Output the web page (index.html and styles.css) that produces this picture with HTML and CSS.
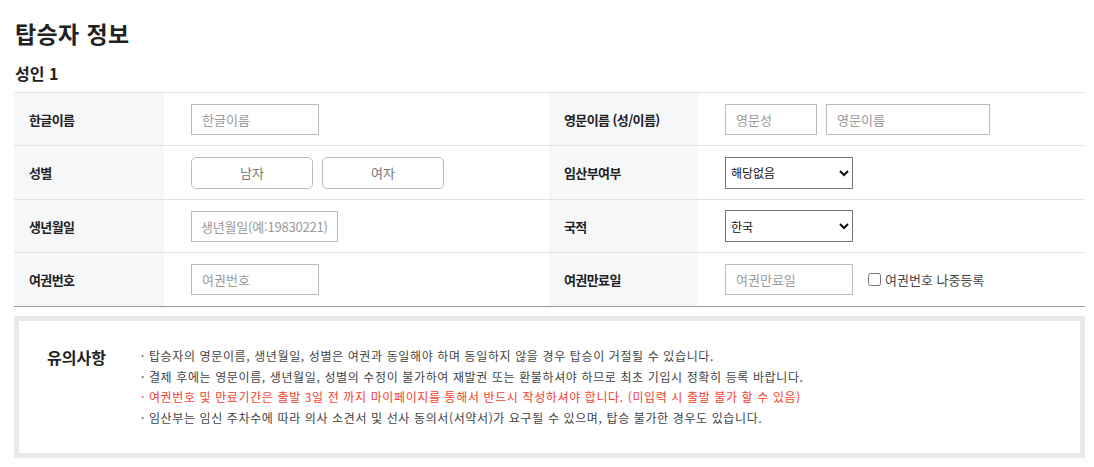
FILE: index.html
```html
<!DOCTYPE html>
<html lang="ko">
<head>
<meta charset="utf-8">
<title>탑승자 정보</title>
<link rel="stylesheet" href="styles.css">
</head>
<body>
<div class="page">
  <h2 class="title">탑승자 정보</h2>
  <h3 class="subtitle">성인 1</h3>

  <div class="form-grid">
    <div class="cell label">한글이름</div>
    <div class="cell value">
      <input class="field w128" type="text" placeholder="한글이름">
    </div>
    <div class="cell label">영문이름 (성/이름)</div>
    <div class="cell value">
      <input class="field w92" type="text" placeholder="영문성">
      <input class="field w164" type="text" placeholder="영문이름">
    </div>

    <div class="cell label">성별</div>
    <div class="cell value">
      <button class="gender" type="button">남자</button>
      <button class="gender" type="button">여자</button>
    </div>
    <div class="cell label">임산부여부</div>
    <div class="cell value">
      <select class="select">
        <option>해당없음</option>
        <option>임산부</option>
      </select>
    </div>

    <div class="cell label">생년월일</div>
    <div class="cell value">
      <input class="field w147 tight" type="text" placeholder="생년월일(예:19830221)">
    </div>
    <div class="cell label">국적</div>
    <div class="cell value">
      <select class="select">
        <option>한국</option>
        <option>기타</option>
      </select>
    </div>

    <div class="cell label last">여권번호</div>
    <div class="cell value last">
      <input class="field w128" type="text" placeholder="여권번호">
    </div>
    <div class="cell label last">여권만료일</div>
    <div class="cell value last">
      <input class="field w128" type="text" placeholder="여권만료일">
      <label class="later"><input type="checkbox" class="check"> 여권번호 나중등록</label>
    </div>
  </div>

  <div class="notice">
    <div class="notice-title">유의사항</div>
    <ul class="notice-list">
      <li>· 탑승자의 영문이름, 생년월일, 성별은 여권과 동일해야 하며 동일하지 않을 경우 탑승이 거절될 수 있습니다.</li>
      <li>· 결제 후에는 영문이름, 생년월일, 성별의 수정이 불가하여 재발권 또는 환불하셔야 하므로 최초 기입시 정확히 등록 바랍니다.</li>
      <li class="warn">· 여권번호 및 만료기간은 출발 3일 전 까지 마이페이지를 통해서 반드시 작성하셔야 합니다. (미입력 시 출발 불가 할 수 있음)</li>
      <li>· 임산부는 임신 주차수에 따라 의사 소견서 및 선사 동의서(서약서)가 요구될 수 있으며, 탑승 불가한 경우도 있습니다.</li>
    </ul>
  </div>
</div>
</body>
</html>
```

FILE: styles.css
```css
* {
  box-sizing: border-box;
}

body {
  margin: 0;
  background: #fff;
  font-family: "Noto Sans CJK KR", "Noto Sans", sans-serif;
  color: #222;
}

.page {
  width: 1071px;
  margin-left: 14px;
}

.title {
  margin: 18px 0 0 1px;
  font-size: 23px;
  line-height: 30px;
  font-weight: 700;
  letter-spacing: 0.4px;
  color: #222;
}

.subtitle {
  margin: 15px 0 0 1px;
  font-size: 16px;
  line-height: 20px;
  font-weight: 700;
  color: #222;
}

.form-grid {
  margin-top: 9px;
  display: grid;
  grid-template-columns: 150px 385px 149px 1fr;
  grid-template-rows: 53px 54px 53px 54px;
  border-top: 1px solid #e2e2e2;
}

.cell {
  display: flex;
  align-items: center;
  border-bottom: 1px solid #e2e2e2;
}

.cell.last {
  border-bottom-color: #999;
}

.label {
  background: #f6f7f9;
  padding-left: 15px;
  font-size: 13px;
  font-weight: 700;
  color: #222;
  letter-spacing: -0.6px;
}

.value {
  padding-left: 27px;
  gap: 9px;
}

.field {
  height: 31px;
  border: 1px solid #bbb;
  border-radius: 0;
  padding: 0 10px;
  font-family: inherit;
  font-size: 13px;
  color: #333;
  outline: none;
  background: #fff;
}

.field.tight {
  padding: 0 2px 0 9px;
  letter-spacing: -0.2px;
}

.field::placeholder {
  color: #9a9a9a;
}

.w92 { width: 92px; }
.w128 { width: 128px; }
.w147 { width: 147px; }
.w164 { width: 164px; }

.gender {
  width: 122px;
  height: 32px;
  border: 1px solid #bbb;
  border-radius: 5px;
  background: #fff;
  font-family: inherit;
  font-size: 13px;
  color: #777;
  padding: 0;
}

.select {
  width: 128px;
  height: 32px;
  border: 1px solid #767676;
  border-radius: 0;
  background: #fff;
  font-family: inherit;
  font-size: 12px;
  color: #111;
  padding: 0 0 0 1px;
}

.later {
  display: flex;
  align-items: center;
  margin-left: 6px;
  font-size: 13px;
  color: #444;
}

.check {
  width: 13px;
  height: 13px;
  margin: 0 4px 0 0;
}

.notice {
  margin-top: 9px;
  border: 5px solid #e9e9e9;
  padding: 25px 28px;
  display: flex;
}

.notice-title {
  width: 94px;
  flex: none;
  font-size: 16px;
  line-height: 22px;
  font-weight: 700;
  color: #222;
}

.notice-list {
  list-style: none;
  margin: 0;
  padding: 0;
  font-size: 12px;
  line-height: 20.5px;
  letter-spacing: 0.62px;
  color: #444;
}

.notice-list .warn {
  color: #f5412e;
}
```
